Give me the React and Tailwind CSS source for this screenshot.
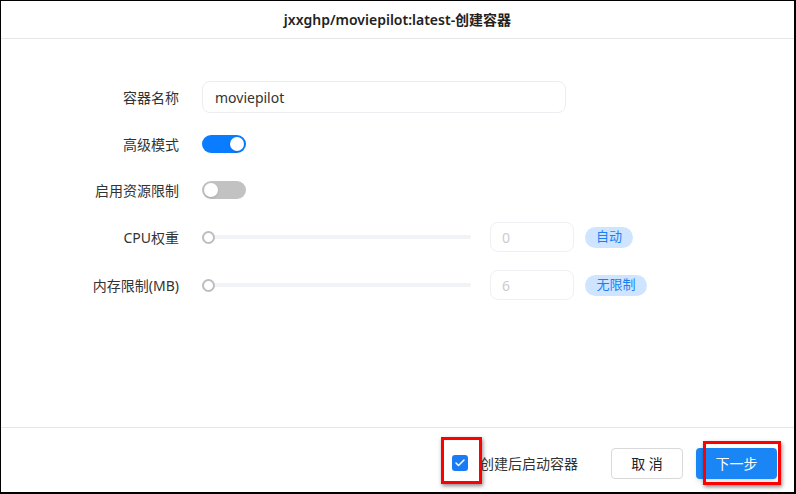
import { Check } from 'lucide-react'

const font = { fontFamily: '"Noto Sans", "Noto Sans CJK SC", sans-serif' }

const Label = ({ children }) => (
  <div className="w-[178px] shrink-0 pr-0 text-right text-[14px] text-[#333]">{children}</div>
)

const Toggle = ({ on }) => (
  <div
    className={
      on
        ? 'flex h-[18px] w-[44px] items-center justify-end rounded-full bg-[#0a7cff] px-[2px]'
        : 'flex h-[18px] w-[44px] items-center justify-start rounded-full bg-[#c2c2c2] px-[2px]'
    }
  >
    <div className="h-[14px] w-[14px] rounded-full bg-white shadow-sm" />
  </div>
)

const SliderRow = ({ label, value, tag, tagW }) => (
  <div className="flex h-[30px] items-center">
    <Label>{label}</Label>
    <div className="relative ml-[23px] flex h-[30px] w-[269px] items-center">
      <div className="h-[4px] w-full rounded-full bg-[#f1f3f6]" />
      <div className="absolute left-0 top-[9px] h-[13px] w-[13px] rounded-full border-2 border-[#bdbdbd] bg-white" />
    </div>
    <div className="ml-[19px] flex h-[30px] w-[84px] items-center rounded-[8px] border border-[#eef0f3] px-[11px] text-[14px] text-[#c8ccd2]">
      {value}
    </div>
    <div
      className={`ml-[11px] flex h-[21px] ${tagW} items-center justify-center rounded-full bg-[#cfe5ff] text-[13px] text-[#1a7ef5]`}
    >
      {tag}
    </div>
  </div>
)

export default function App() {
  return (
    <div
      className="relative flex h-[494px] w-[796px] flex-col border-b-2 border-l border-r-2 border-t border-black bg-white"
      style={font}
    >
      <div className="flex h-[38px] shrink-0 items-center justify-center border-b border-[#e6e6e6] text-[14px] font-semibold text-[#222]">
        jxxghp/moviepilot:latest-创建容器
      </div>

      <div className="flex-1">
        <div className="mt-[42px] flex h-[32px] items-center">
          <Label>容器名称</Label>
          <div className="ml-[23px] flex h-[32px] w-[364px] items-center rounded-[8px] border border-[#ebedf0] px-[12px] text-[14px] text-[#333]">
            moviepilot
          </div>
        </div>
        <div className="mt-[15px] flex h-[32px] items-center">
          <Label>高级模式</Label>
          <div className="ml-[23px]">
            <Toggle on />
          </div>
        </div>
        <div className="mt-[14px] flex h-[32px] items-center">
          <Label>启用资源限制</Label>
          <div className="ml-[23px]">
            <Toggle />
          </div>
        </div>
        <div className="mt-[16px]">
          <SliderRow label="CPU权重" value="0" tag="自动" tagW="w-[48px]" />
        </div>
        <div className="mt-[18px]">
          <SliderRow label="内存限制(MB)" value="6" tag="无限制" tagW="w-[62px]" />
        </div>
      </div>

      <div className="flex h-[65px] shrink-0 items-center justify-end border-t border-[#e6e6e6] pr-[17px] pt-[6px]">
        <div className="flex h-[16px] w-[16px] items-center justify-center rounded-[3px] bg-[#1a7cf5]">
          <Check size={12} strokeWidth={3} color="white" />
        </div>
        <span className="ml-[12px] text-[14px] text-[#333]">创建后启动容器</span>
        <button className="ml-[33px] flex h-[31px] w-[72px] items-center justify-center rounded-[4px] border border-[#d9d9d9] bg-white text-[14px] text-[#222]">
          取 消
        </button>
        <button className="ml-[13px] flex h-[31px] w-[81px] items-center justify-center rounded-[4px] bg-[#1a86f5] text-[14px] text-white shadow-md">
          下一步
        </button>
      </div>

      <div className="absolute left-[440px] top-[436px] h-[47px] w-[41px] border-[3px] border-[#ff0000] shadow-[1px_2px_4px_rgba(0,0,0,0.45)]" />
      <div className="absolute left-[702px] top-[440px] h-[44px] w-[78px] border-[3px] border-[#ff0000] shadow-[1px_2px_4px_rgba(0,0,0,0.45)]" />
    </div>
  )
}
